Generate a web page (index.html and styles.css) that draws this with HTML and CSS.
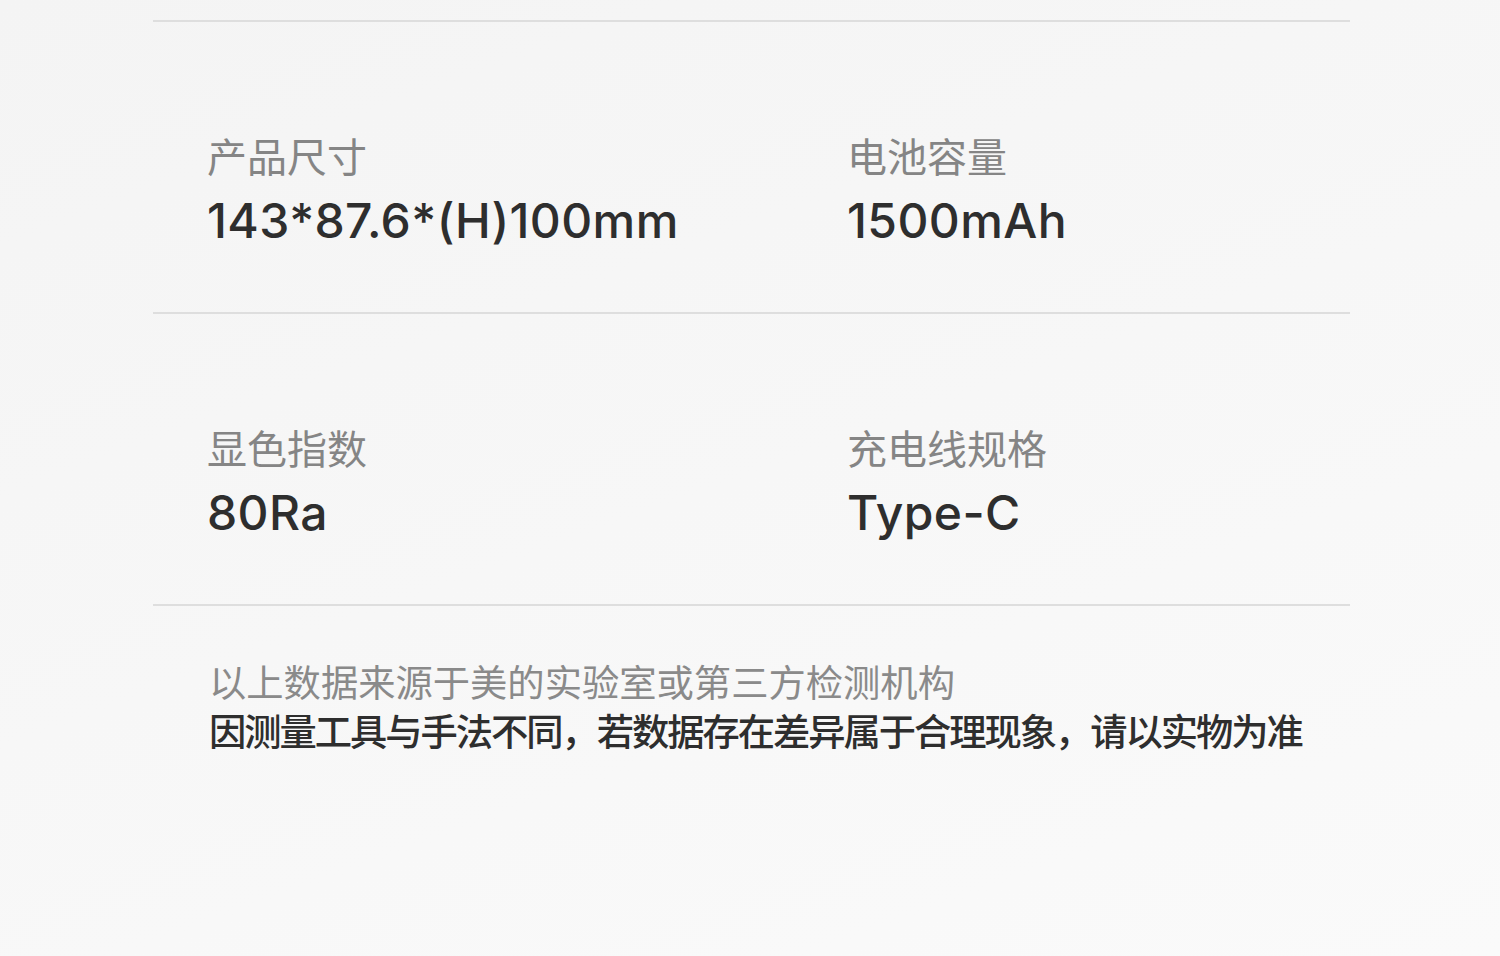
FILE: index.html
```html
<!DOCTYPE html>
<html lang="zh-CN">
<head>
<meta charset="utf-8">
<link rel="stylesheet" href="styles.css">
</head>
<body>
<main class="page">
  <section class="spec-row">
    <div class="spec">
      <div class="spec-label">产品尺寸</div>
      <div class="spec-value">143*87.6*(H)100mm</div>
    </div>
    <div class="spec">
      <div class="spec-label">电池容量</div>
      <div class="spec-value">1500mAh</div>
    </div>
  </section>
  <section class="spec-row">
    <div class="spec">
      <div class="spec-label">显色指数</div>
      <div class="spec-value">80Ra</div>
    </div>
    <div class="spec">
      <div class="spec-label">充电线规格</div>
      <div class="spec-value">Type-C</div>
    </div>
  </section>
  <section class="note">
    <p class="note-muted">以上数据来源于美的实验室或第三方检测机构</p>
    <p class="note-strong">因测量工具与手法不同，若数据存在差异属于合理现象，请以实物为准</p>
  </section>
</main>
</body>
</html>
```
FILE: styles.css
```css
html, body {
  margin: 0;
  padding: 0;
}
body {
  width: 1500px;
  height: 956px;
  overflow: hidden;
  background: linear-gradient(160deg, #f4f4f4 0%, #f7f7f7 50%, #fafafa 100%);
  font-family: "Inter", "Noto Sans CJK SC", sans-serif;
}
.page {
  padding: 20px 150px 0 153px;
}
.spec-row {
  border-top: 2px solid #dedede;
  height: 290px;
  box-sizing: content-box;
  display: grid;
  grid-template-columns: 640px 1fr;
  padding-left: 54px;
  align-content: start;
}
.spec {
  padding-top: 105px;
}
.spec-label {
  font-family: "Noto Sans CJK SC", sans-serif;
  font-size: 40px;
  line-height: 56px;
  color: #858585;
}
.spec-value {
  margin-top: 7px;
  font-size: 48px;
  line-height: 62px;
  font-weight: 500;
  color: #2e2e2e;
  letter-spacing: 0.4px;
}
.note {
  border-top: 2px solid #dedede;
  padding: 51px 0 0 56px;
  font-family: "Noto Sans CJK SC", sans-serif;
  font-size: 37.3px;
  line-height: 49px;
}
.note p {
  margin: 0;
}
.note-muted {
  color: #8a8a8a;
}
.note-strong {
  color: #2e2e2e;
  font-weight: 500;
  letter-spacing: -2.05px;
}
```
